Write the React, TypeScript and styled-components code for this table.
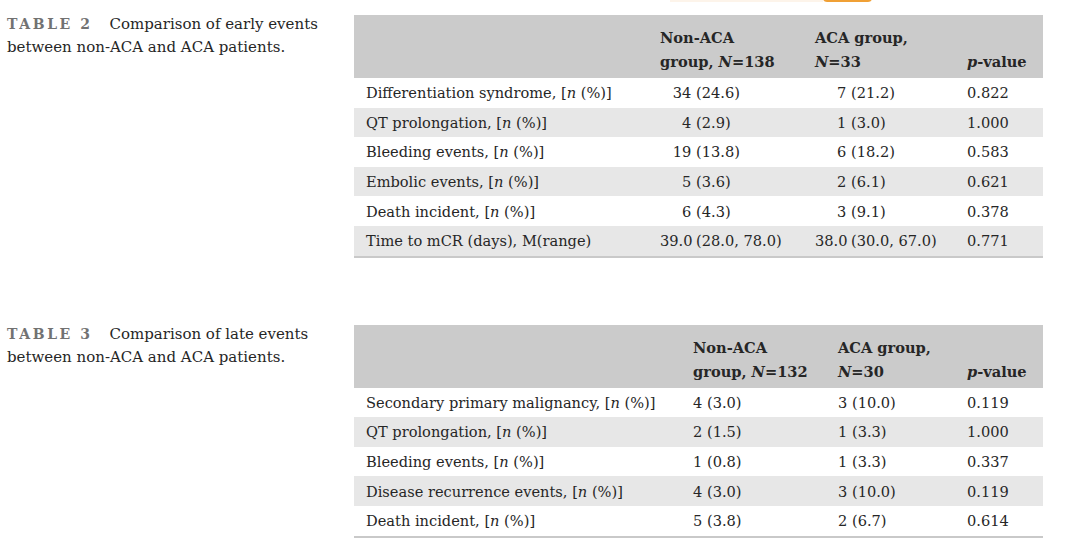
import React from "react";
import styled, { createGlobalStyle } from "styled-components";

const GlobalStyle = createGlobalStyle`
  html, body { margin: 0; padding: 0; background: #ffffff; }
  body {
    font-family: "DejaVu Serif", "Liberation Serif", serif;
    color: #262626;
  }
`;

const Page = styled.main`
  position: relative;
  width: 1080px;
  height: 554px;
  overflow: hidden;
  box-sizing: border-box;
  padding: 12px 0 0 7px;
  display: flex;
  flex-direction: column;
  gap: 64px;
`;

const TopTab = styled.div`
  position: absolute;
  top: -8px;
  left: 823px;
  width: 49px;
  height: 10px;
  border-radius: 4px;
  background: #f0a035;
`;

const TopGlow = styled.div`
  position: absolute;
  top: 0;
  left: 670px;
  width: 153px;
  height: 2px;
  background: #fdf4ea;
`;

const Figure = styled.section`
  display: flex;
  align-items: flex-start;
`;

const Caption = styled.p`
  margin: 0;
  padding-top: 1px;
  width: 347px;
  flex: none;
  font-size: 15px;
  line-height: 23px;
`;

const CapLabel = styled.span`
  font-weight: bold;
  letter-spacing: 2.6px;
  font-size: 14px;
  color: #727272;
  margin-right: 12px;
`;

const Table = styled.div`
  margin-top: 3px;
  width: 689px;
  border-bottom: 2px solid #c9c9c9;
  font-size: 14.6px;
`;

const HeadRow = styled.div<{ $cols: string }>`
  display: grid;
  grid-template-columns: ${(p) => p.$cols};
  height: 63px;
  align-items: end;
  background: #cbcbcb;
`;

const HeadCell = styled.div`
  padding: 0 0 4px 10px;
  font-weight: bold;
  line-height: 24px;
  white-space: nowrap;
  &:first-child { padding-left: 12px; }
`;

const Row = styled.div<{ $cols: string; $striped: boolean }>`
  display: grid;
  grid-template-columns: ${(p) => p.$cols};
  height: 29.6px;
  align-items: center;
  background: ${(p) => (p.$striped ? "#e7e7e7" : "#ffffff")};
`;

const Cell = styled.div`
  padding-left: 10px;
  white-space: nowrap;
  &:first-child { padding-left: 12px; }
`;

const Num = styled.span<{ $aligned: boolean }>`
  display: inline-block;
  width: ${(p) => (p.$aligned ? "2.15em" : "auto")};
  text-align: right;
`;

type Pair = [string, string];
type DataRow = { label: string; suffix: boolean; a: Pair; b: Pair; p: string };

const table2: DataRow[] = [
  { label: "Differentiation syndrome, ", suffix: true, a: ["34", "(24.6)"], b: ["7", "(21.2)"], p: "0.822" },
  { label: "QT prolongation, ", suffix: true, a: ["4", "(2.9)"], b: ["1", "(3.0)"], p: "1.000" },
  { label: "Bleeding events, ", suffix: true, a: ["19", "(13.8)"], b: ["6", "(18.2)"], p: "0.583" },
  { label: "Embolic events, ", suffix: true, a: ["5", "(3.6)"], b: ["2", "(6.1)"], p: "0.621" },
  { label: "Death incident, ", suffix: true, a: ["6", "(4.3)"], b: ["3", "(9.1)"], p: "0.378" },
  { label: "Time to mCR (days), M(range)", suffix: false, a: ["39.0", "(28.0, 78.0)"], b: ["38.0", "(30.0, 67.0)"], p: "0.771" },
];

const table3: DataRow[] = [
  { label: "Secondary primary malignancy, ", suffix: true, a: ["4", "(3.0)"], b: ["3", "(10.0)"], p: "0.119" },
  { label: "QT prolongation, ", suffix: true, a: ["2", "(1.5)"], b: ["1", "(3.3)"], p: "1.000" },
  { label: "Bleeding events, ", suffix: true, a: ["1", "(0.8)"], b: ["1", "(3.3)"], p: "0.337" },
  { label: "Disease recurrence events, ", suffix: true, a: ["4", "(3.0)"], b: ["3", "(10.0)"], p: "0.119" },
  { label: "Death incident, ", suffix: true, a: ["5", "(3.8)"], b: ["2", "(6.7)"], p: "0.614" },
];

const Value: React.FC<{ v: Pair; aligned: boolean }> = ({ v, aligned }) => (
  <Cell>
    <Num $aligned={aligned}>{v[0]}</Num> {v[1]}
  </Cell>
);

const DataTable: React.FC<{ cols: string; nA: string; nB: string; rows: DataRow[]; aligned: boolean }> = ({
  cols,
  nA,
  nB,
  rows,
  aligned,
}) => (
  <Table>
    <HeadRow $cols={cols}>
      <HeadCell />
      <HeadCell>
        Non-ACA
        <br />
        group, <i>N</i>={nA}
      </HeadCell>
      <HeadCell>
        ACA group,
        <br />
        <i>N</i>={nB}
      </HeadCell>
      <HeadCell>
        <i>p</i>-value
      </HeadCell>
    </HeadRow>
    {rows.map((r, i) => (
      <Row key={i} $cols={cols} $striped={i % 2 === 1}>
        <Cell>
          {r.label}
          {r.suffix && (
            <>
              [<i>n</i> (%)]
            </>
          )}
        </Cell>
        <Value v={r.a} aligned={aligned} />
        <Value v={r.b} aligned={aligned} />
        <Cell>{r.p}</Cell>
      </Row>
    ))}
  </Table>
);

export default function App() {
  return (
    <>
      <GlobalStyle />
      <Page>
        <TopGlow />
        <TopTab />
        <Figure>
          <Caption>
            <CapLabel>TABLE 2</CapLabel> Comparison of early events
            <br />
            between non-ACA and ACA patients.
          </Caption>
          <DataTable cols="296px 155px 152px 86px" nA="138" nB="33" rows={table2} aligned />
        </Figure>
        <Figure>
          <Caption>
            <CapLabel>TABLE 3</CapLabel> Comparison of late events
            <br />
            between non-ACA and ACA patients.
          </Caption>
          <DataTable cols="329px 145px 129px 86px" nA="132" nB="30" rows={table3} aligned={false} />
        </Figure>
      </Page>
    </>
  );
}
